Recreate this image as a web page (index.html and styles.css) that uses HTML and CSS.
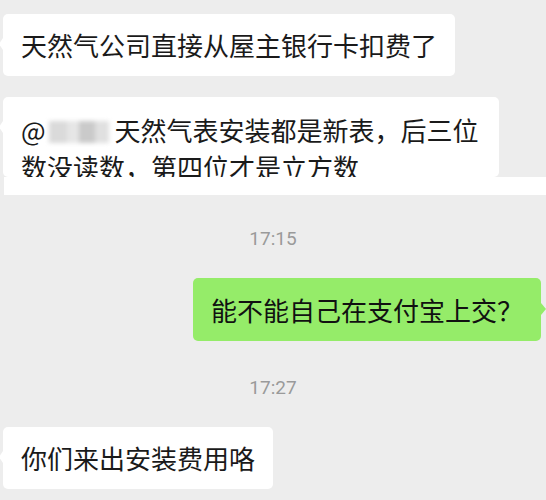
FILE: index.html
```html
<!DOCTYPE html>
<html lang="zh-CN">
<head>
    <meta charset="UTF-8">
    <meta name="viewport" content="width=device-width, initial-scale=1.0">
    <title>聊天记录</title>
    <link rel="stylesheet" href="styles.css">
</head>
<body>
    <div class="chat">
        <div class="row row-left">
            <div class="bubble bubble-in">天然气公司直接从屋主银行卡扣费了</div>
        </div>

        <!-- second message is cut off by the screenshot seam -->
        <div class="row row-left clipped">
            <div class="bubble bubble-in bubble-wide">@<span class="masked-name"></span> 天然气表安装都是新表，后三位数没读数，第四位才是立方数</div>
        </div>
        <div class="seam"></div>

        <div class="time">17:15</div>

        <div class="row row-right">
            <div class="bubble bubble-out">能不能自己在支付宝上交？</div>
        </div>

        <div class="time time-late">17:27</div>

        <div class="row row-left">
            <div class="bubble bubble-in">你们来出安装费用咯</div>
        </div>
    </div>
</body>
</html>
```

FILE: styles.css
```css
body {
    margin: 0;
    padding: 0;
    background-color: #ededed;
    font-family: "Noto Sans CJK SC", "Noto Sans", sans-serif;
    color: #1a1a1a;
}

.chat {
    display: flex;
    flex-direction: column;
    padding-top: 14px;
}

.row {
    display: flex;
}

.row-left {
    justify-content: flex-start;
    padding-left: 3px;
}

.row-right {
    justify-content: flex-end;
    padding-right: 5px;
    margin-top: 27px;
}

.bubble {
    position: relative;
    box-sizing: border-box;
    padding: 12px 18px 13px;
    font-size: 26px;
    line-height: 37px;
    border-radius: 5px;
}

.bubble-in {
    background-color: #fff;
}

.bubble-in::before {
    content: "";
    position: absolute;
    left: -4px;
    top: 24px;
    border-style: solid;
    border-width: 6px 4px 6px 0;
    border-color: transparent #fff transparent transparent;
}

.bubble-out {
    background-color: #95ec69;
    color: #111;
    padding: 13px 18px;
}

.bubble-out::after {
    content: "";
    position: absolute;
    right: -5px;
    top: 25px;
    border-style: solid;
    border-width: 6px 0 6px 5px;
    border-color: transparent transparent transparent #95ec69;
}

.bubble-wide {
    max-width: 496px;
    padding-top: 14px;
}

.clipped {
    margin-top: 21px;
    height: 80px;
    overflow: hidden;
}

.masked-name {
    display: inline-block;
    width: 60px;
    height: 22px;
    margin-left: 3px;
    vertical-align: -2px;
    background: linear-gradient(90deg, #dadada 0 18px, #e6e6e6 18px 30px, #cacaca 30px 46px, #e0e0e0 46px 60px);
    filter: blur(2px);
}

.seam {
    height: 18px;
    margin-left: 4px;
    background-color: #fff;
}

.time {
    margin-top: 32px;
    text-align: center;
    font-family: Roboto, "Liberation Sans", sans-serif;
    font-size: 19px;
    line-height: 24px;
    color: #9a9a9a;
}

.time-late {
    margin-top: 35px;
    margin-bottom: 27px;
}
```
